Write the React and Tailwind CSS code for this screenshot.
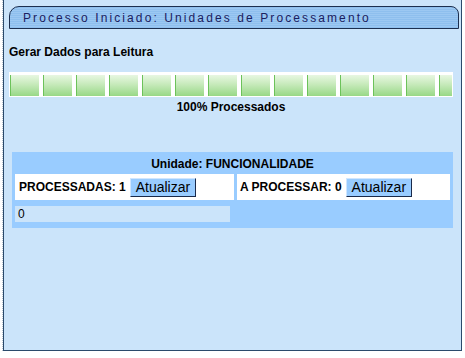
import React from 'react';

const segments = Array.from({ length: 14 });

function UpdateButton() {
  return (
    <button className="ml-1 h-[19px] px-[5px] bg-[#99ccff] border border-t-[#cfe6ff] border-l-[#cfe6ff] border-r-[#1a2a4a] border-b-[#1a2a4a] text-[14px] leading-none text-black font-normal">
      Atualizar
    </button>
  );
}

export default function App() {
  return (
    <div className="w-[465px] h-[358px] bg-white font-['Liberation_Sans',Arial,sans-serif] text-black flex">
      <div className="w-[3px] h-[351px] border-r border-dotted border-[#b8c4d0]" />
      <div className="w-[459px] h-[351px] bg-[#cbe4fa] border border-t-0 border-[#2b4a6b] pt-[6px] pl-[5px] pr-[2px] flex flex-col">
        <div className="h-[23px] rounded-tl-[10px] rounded-tr-[8px] border border-[#1c2f4f] bg-[repeating-linear-gradient(to_bottom,#8ebfee_0px,#8ebfee_1px,#9cc8f2_1px,#9cc8f2_2px)] pl-[13px] flex items-center text-[12px] tracking-[2.1px] text-[#1b2060]">
          Processo Iniciado: Unidades de Processamento
        </div>

        <div className="mt-[17px] text-[12px] font-bold leading-none">Gerar Dados para Leitura</div>

        <div className="mt-[14px] w-[444px] h-[25px] bg-white pt-[3px] pb-[1px] pl-[1px] flex gap-[4px]">
          {segments.map((_, i) => (
            <div
              key={i}
              className={`${i === 13 ? 'w-[13px]' : 'w-[29px]'} h-full border-l border-[#6cc25a] bg-[linear-gradient(to_bottom,#e8f7e2,#c6eaba_45%,#98d887)]`}
            />
          ))}
        </div>

        <div className="mt-[4px] w-[444px] text-center text-[12px] font-bold leading-none">100% Processados</div>

        <div className="mt-[39px] ml-[3px] w-[441px] bg-[#99ccff] p-[3px] text-[12px]">
          <div className="h-[17px] flex items-center justify-center font-bold">Unidade: FUNCIONALIDADE</div>
          <div className="mt-[2px] flex gap-[3px]">
            <div className="w-[219px] h-[26px] bg-white flex items-center pl-[4px] font-bold">
              PROCESSADAS: 1
              <UpdateButton />
            </div>
            <div className="w-[213px] h-[26px] bg-white flex items-center pl-[3px] font-bold">
              A PROCESSAR: 0
              <UpdateButton />
            </div>
          </div>
          <div className="mt-[6px] w-[215px] h-[16px] bg-[#cbe4fa] flex items-center pl-[3px]">0</div>
          <div className="h-[3px]" />
        </div>
      </div>
    </div>
  );
}
